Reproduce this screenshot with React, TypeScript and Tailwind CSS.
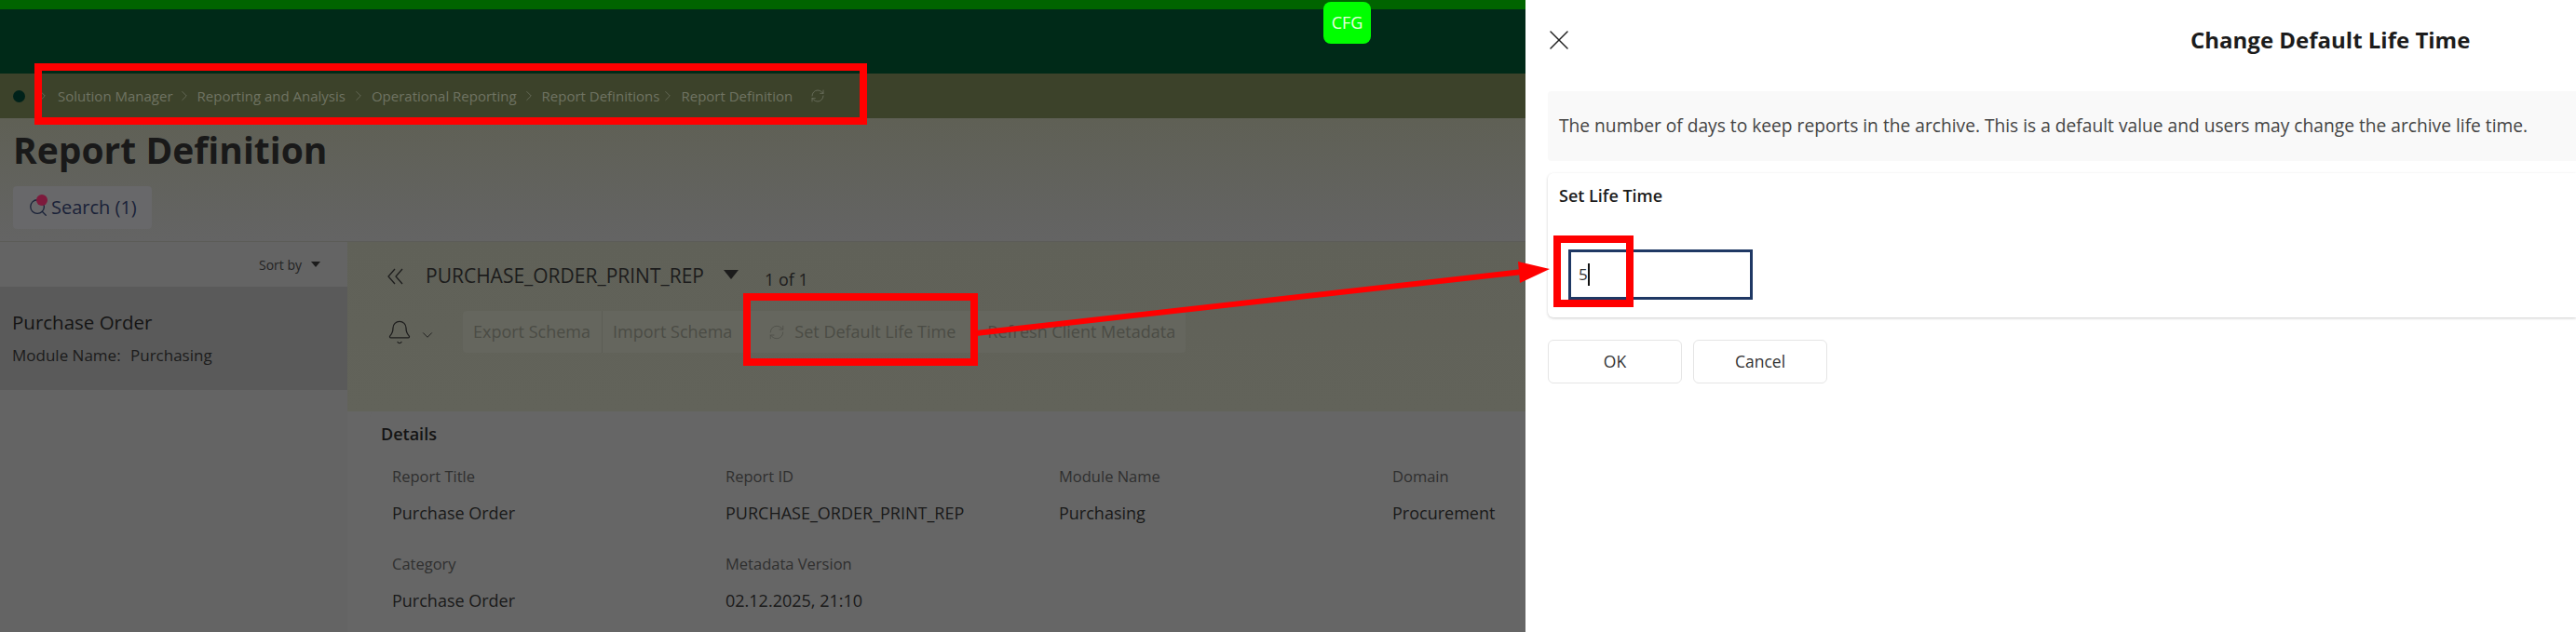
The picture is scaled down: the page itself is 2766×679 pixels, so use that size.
import React from "react";
import { Bell, ChevronDown, ChevronRight, RefreshCw, Search, X } from "lucide-react";

const crumbs = [
  { label: "Solution Manager", cls: "ml-[7px] mr-[3px]" },
  { label: "Reporting and Analysis", cls: "mr-[5px]" },
  { label: "Operational Reporting", cls: "mr-[4px]" },
  { label: "Report Definitions", cls: "mr-0" },
  { label: "Report Definition", cls: "mr-[19px]" },
];

function Field({ label, value }: { label: string; value: string }) {
  return (
    <div className="flex flex-col">
      <div className="text-[16.5px] leading-[22px] text-[#2f2f2f]">{label}</div>
      <div className="mt-[17px] text-[18px] leading-[22px] text-[#191919]">{value}</div>
    </div>
  );
}

function ToolButton({ children, cls }: { children: React.ReactNode; cls: string }) {
  return (
    <div className={"flex h-full items-center whitespace-nowrap text-[18px] text-[#4b4c45] " + cls}>{children}</div>
  );
}

export default function App() {
  return (
    <div className="relative flex h-[679px] w-[2766px] overflow-hidden font-['Open_Sans',sans-serif]">
      <div className="flex h-full w-[1638px] shrink-0 flex-col bg-[#666666]">
        <div className="h-[10px] bg-[#006400]" />
        <div className="relative h-[69px] bg-[#002a18]">
          <div className="absolute left-[1421px] top-[-8px] flex h-[45px] w-[51px] items-center justify-center rounded-[8px] bg-[#00ff00] text-[18px] text-[#e8ffe0]">
            CFG
          </div>
        </div>
        <div className="flex h-[48px] items-center bg-[#3c422a] pl-[14px] text-[15px] text-[#6f7362]">
          <div className="h-[13px] w-[13px] rounded-full bg-[#00221a]" />
          <ChevronRight className="ml-[10px] h-[18px] w-[18px] shrink-0" strokeWidth={1} />
          {crumbs.map((c, i) => (
            <React.Fragment key={c.label}>
              <span className={c.cls + " whitespace-nowrap"}>{c.label}</span>
              {i < crumbs.length - 1 && <ChevronRight className="mr-[5px] h-[18px] w-[18px] shrink-0" strokeWidth={1} />}
            </React.Fragment>
          ))}
          <RefreshCw className="h-[16px] w-[16px]" strokeWidth={1.2} />
        </div>
        <div className="flex h-[132px] flex-col bg-gradient-to-b from-[#5f6055] to-[#646464] pl-[14px]">
          <div className="mt-[10px] text-[39px] font-bold leading-[48px] text-[#191919]">Report Definition</div>
          <div className="relative mt-[15px] flex h-[46px] w-[149px] items-center rounded-[4px] bg-[#68686a] pl-[16px] text-[20px] text-[#1a2238]">
            <Search className="h-[22px] w-[22px]" strokeWidth={1.4} />
            <span className="ml-[3px]">Search (1)</span>
            <div className="absolute left-[25px] top-[9px] h-[12px] w-[12px] rounded-full bg-[#7d1a3c]" />
          </div>
        </div>
        <div className="flex min-h-0 flex-1 border-t border-[#5c5c58]">
          <div className="w-[373px] shrink-0 bg-[#646464]">
            <div className="flex h-[48px] items-center justify-end pr-[29px] text-[14px] text-[#232323]">
              <span>Sort by</span>
              <span className="ml-[10px] h-0 w-0 border-x-[5px] border-t-[6px] border-x-transparent border-t-[#1c1c1c]" />
            </div>
            <div className="h-[111px] bg-[#5a5a5a] pl-[13px] pt-[25px]">
              <div className="text-[20.5px] leading-[26px] text-[#141414]">Purchase Order</div>
              <div className="mt-[12px] flex text-[17px] leading-[22px] text-[#1c1c1c]">
                <span className="w-[127px]">Module Name:</span>
                <span>Purchasing</span>
              </div>
            </div>
          </div>
          <div className="flex min-w-0 flex-1 flex-col bg-[#666666]">
            <div className="h-[182px] bg-gradient-to-b from-[#606158] to-[#62635a] pl-[42px]">
              <div className="flex h-[74px] items-center">
                <svg className="h-[20px] w-[20px] text-[#1d1d1d]" viewBox="0 0 20 20" fill="none" stroke="currentColor" strokeWidth="1.3">
                  <path d="M9 2 L2 10 L9 18" />
                  <path d="M17 2 L10 10 L17 18" />
                </svg>
                <span className="ml-[22px] whitespace-nowrap text-[21px] font-medium text-[#1c1c1c]">PURCHASE_ORDER_PRINT_REP</span>
                <span className="mb-[4px] ml-[21px] h-0 w-0 border-x-[8px] border-t-[10px] border-x-transparent border-t-[#1c1c1c]" />
                <span className="ml-[28px] mt-[6px] text-[18px] text-[#1c1c1c]">1 of 1</span>
              </div>
              <div className="flex h-[45px] items-center">
                <Bell className="h-[28px] w-[28px] text-[#1d1d1d]" strokeWidth={1.1} />
                <ChevronDown className="ml-[7px] mt-[6px] h-[18px] w-[18px] text-[#1d1d1d]" strokeWidth={1.2} />
                <div className="ml-[29px] flex h-full rounded-[4px] bg-[#65665e]">
                  <ToolButton cls="border-r border-[#5c5d55] pl-[11px] pr-[12px]">Export Schema</ToolButton>
                  <ToolButton cls="pl-[11px] pr-[11px]">Import Schema</ToolButton>
                  <ToolButton cls="pl-[28px] pr-[8px]">
                    <RefreshCw className="mr-[10px] h-[18px] w-[18px]" strokeWidth={1} />
                    Set Default Life Time
                  </ToolButton>
                  <ToolButton cls="pl-[26px] pr-[11px]">Refresh Client Metadata</ToolButton>
                </div>
              </div>
            </div>
            <div className="ml-[24px] min-w-0 flex-1 rounded-tl-[6px] bg-[#666666] pl-[12px]">
              <div className="mt-[12px] text-[18px] font-semibold leading-[24px] text-[#141414]">Details</div>
              <div className="ml-[12px] mt-[23px] grid grid-cols-[358px_358px_358px_358px] gap-y-[33px]">
                <Field label="Report Title" value="Purchase Order" />
                <Field label="Report ID" value="PURCHASE_ORDER_PRINT_REP" />
                <Field label="Module Name" value="Purchasing" />
                <Field label="Domain" value="Procurement" />
                <Field label="Category" value="Purchase Order" />
                <Field label="Metadata Version" value="02.12.2025, 21:10" />
              </div>
            </div>
          </div>
        </div>
      </div>

      <div className="min-w-0 flex-1 bg-white pl-[24px]">
        <div className="relative flex h-[98px] items-start">
          <X className="absolute left-[-6px] top-[25px] h-[36px] w-[36px] text-[#222222]" strokeWidth={1} />
          <div className="ml-[690px] mt-[26px] whitespace-nowrap text-[24px] font-bold leading-[34px] text-[#1c1c1c]">
            Change Default Life Time
          </div>
        </div>
        <div className="flex h-[75px] items-center whitespace-nowrap rounded-l-[4px] bg-[#f9f9f9] pl-[12px] text-[19.2px] text-[#444444]">
          The number of days to keep reports in the archive. This is a default value and users may change the archive life time.
        </div>
        <div className="mt-[13px] h-[155px] rounded-l-[6px] bg-white pl-[12px] pt-[11px] shadow-[0_1px_3px_rgba(0,0,0,0.2)]">
          <div className="text-[18px] font-semibold leading-[26px] text-[#1c1c1c]">Set Life Time</div>
          <div className="ml-[10px] mt-[45px] flex h-[54px] w-[198px] items-center border-[3px] border-[#1f3864] pl-[8px] text-[17px] text-[#333333]">
            <span>5</span>
            <span className="h-[24px] w-[2px] bg-[#111111]" />
          </div>
        </div>
        <div className="mt-[24px] flex gap-[12px]">
          <div className="flex h-[47px] w-[144px] items-center justify-center rounded-[6px] border border-[#e5e5e5] text-[17.5px] text-[#333333]">OK</div>
          <div className="flex h-[47px] w-[144px] items-center justify-center rounded-[6px] border border-[#e5e5e5] text-[17.5px] text-[#333333]">Cancel</div>
        </div>
      </div>

      <div className="absolute left-[37px] top-[68px] h-[66px] w-[894px] border-[8px] border-[#ff0000]" />
      <div className="absolute left-[798px] top-[315px] h-[78px] w-[252px] border-[8px] border-[#ff0000]" />
      <div className="absolute left-[1668px] top-[253px] h-[77px] w-[86px] border-[8px] border-[#ff0000]" />
      <svg className="absolute left-[1040px] top-[270px]" width="640" height="100" viewBox="0 0 640 100">
        <line x1="8" y1="88" x2="595" y2="22" stroke="#ff0000" strokeWidth="6" />
        <polygon points="590,11 624,19 592,34" fill="#ff0000" />
      </svg>
    </div>
  );
}
